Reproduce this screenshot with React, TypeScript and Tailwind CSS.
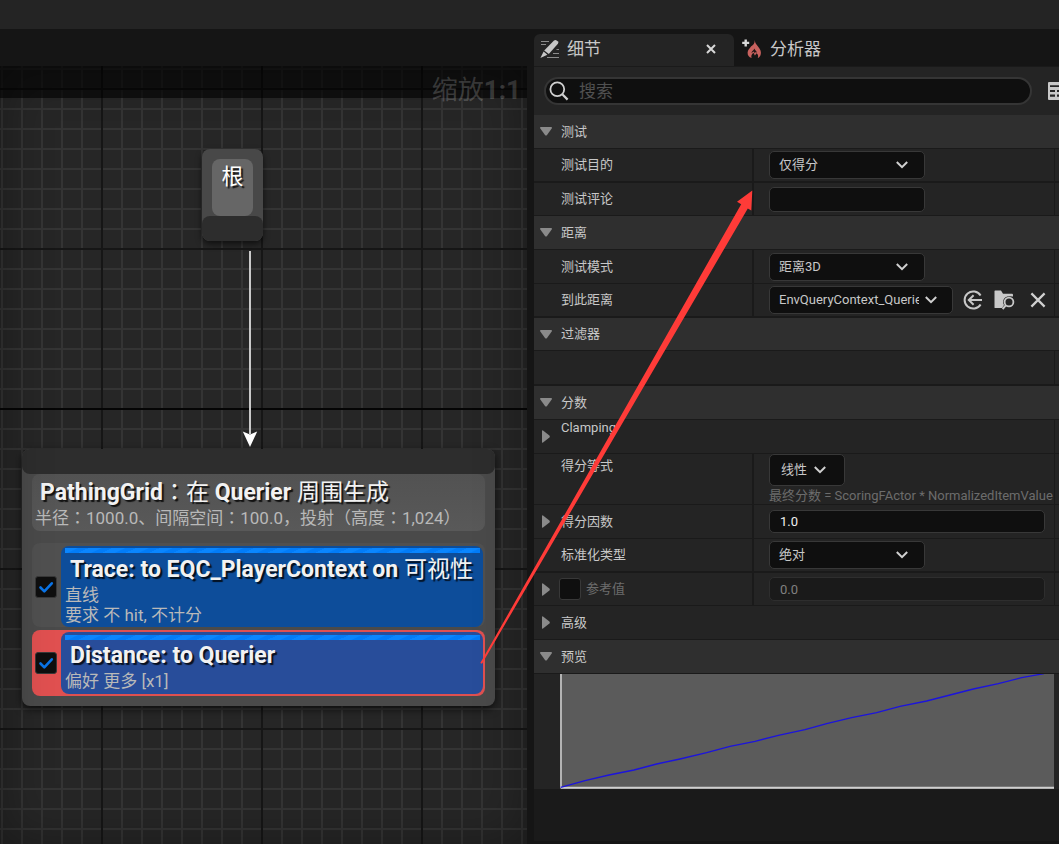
import type { ReactNode } from 'react';

const SANS = "font-['Roboto','Noto_Sans_CJK_SC',sans-serif]";

/* Full-width punctuation with centred glyphs */
function Mark({ children }: { children: ReactNode }) {
  return <span className="font-['Noto_Sans_CJK_JP',sans-serif] font-normal">{children}</span>;
}

function Cjk({ children }: { children: ReactNode }) {
  return <span className="font-normal">{children}</span>;
}

function Chevron({ className = '' }: { className?: string }) {
  return (
    <svg viewBox="0 0 12 8" className={`h-2 w-3 ${className}`} fill="none" stroke="#d0d0d0" strokeWidth="2" aria-hidden="true">
      <path d="M0.8 1 L6 6.2 L11.2 1" />
    </svg>
  );
}

function Triangle({ open }: { open: boolean }) {
  return open ? (
    <svg viewBox="0 0 12 9" className="h-[9px] w-3" fill="#8a8a8a" aria-hidden="true">
      <path d="M0.8 0 H11.2 Q12.4 0.4 11.7 1.4 L7 8 Q6 9 5 8 L0.3 1.4 Q-0.4 0.4 0.8 0Z" />
    </svg>
  ) : (
    <svg viewBox="0 0 8 13" className="ml-0.5 h-[13px] w-2" fill="#8a8a8a" aria-hidden="true">
      <path d="M0 0.8 Q0.2 0 1 0.4 L7.4 5.6 Q8.2 6.5 7.4 7.4 L1 12.6 Q0.2 13 0 12.2Z" />
    </svg>
  );
}

function Expander({ open, name }: { open: boolean; name: string }) {
  return (
    <button type="button" aria-expanded={open} aria-label={name} className="flex w-[21px] shrink-0 items-center">
      <Triangle open={open} />
    </button>
  );
}

function Section({ title, open = true, tall = 'h-[34px]' }: { title: string; open?: boolean; tall?: string }) {
  return (
    <h2 className={`border-b border-[#1a1a1a] text-[13px] leading-5 ${tall} ${open ? 'bg-[#2f2f2f]' : 'bg-[#242424]'}`}>
      <button type="button" aria-expanded={open} className="flex h-full w-full items-center pl-1.5 text-left">
        <span className="flex w-[21px]">
          <Triangle open={open} />
        </span>
        {title}
      </button>
    </h2>
  );
}

type RowProps = {
  label: ReactNode;
  size?: string;
  line?: string;
  expander?: string;
  top?: boolean;
  children?: ReactNode;
};

function Row({ label, size = 'h-[34px]', line = 'border-b', expander, top, children }: RowProps) {
  return (
    <div className={`flex border-[#1a1a1a] bg-[#242424] text-[13px] leading-5 ${size} ${line}`}>
      <div className={`flex w-[218px] shrink-0 pl-1.5 ${top ? 'items-start pt-0.5' : 'items-center'}`}>
        {expander ? <Expander open={false} name={expander} /> : <span className="w-[21px] shrink-0" />}
        {label}
      </div>
      <div className="min-w-0 flex-1 border-l-2 border-[#1a1a1a]">
        <div className="flex h-full items-center pl-[15px]">{children}</div>
      </div>
      <div className="w-[5px] shrink-0 border-l border-[#1a1a1a]" />
    </div>
  );
}

function Select({ id, value, width, height = 'h-7', pad = 'pl-[9px] pr-[33px]', chevron = 'right-[17px]' }: { id: string; value: string; width: string; height?: string; pad?: string; chevron?: string }) {
  return (
    <div className={`relative flex shrink-0 items-center ${width}`}>
      <select id={id} defaultValue={value} className={`w-full appearance-none rounded-[5px] border border-[#383838] bg-[#0f0f0f] text-[13px] text-[#c8c8c8] ${height} ${pad}`}>
        <option>{value}</option>
      </select>
      <Chevron className={`pointer-events-none absolute ${chevron}`} />
    </div>
  );
}

function Tick({ name }: { name: string }) {
  return (
    <span className="relative mr-1 ml-[3px] flex h-[22px] w-[22px] shrink-0">
      <input type="checkbox" defaultChecked aria-label={name} className="h-full w-full appearance-none rounded-[3px] border border-[#383838] bg-[#0f0f0f]" />
      <svg viewBox="0 0 22 22" className="pointer-events-none absolute inset-0" fill="none" stroke="#0a74e8" strokeWidth="2.6" strokeLinecap="round" strokeLinejoin="round" aria-hidden="true">
        <path d="M5.5 11.5 L9.3 15.3 L16.8 7.3" />
      </svg>
    </span>
  );
}

function Stripe() {
  return <div className="mr-[3px] ml-1 h-[5px] bg-[repeating-linear-gradient(155deg,#0a86ff_0px,#0a86ff_5px,#027cf8_6px,#027cf8_10px)]" />;
}

const TITLE = 'text-[23px] font-bold whitespace-nowrap text-[#f2f2f2] [text-shadow:2px_2px_1px_#000000cc]';
const SUB = 'text-[17px] leading-5 whitespace-nowrap text-[#b9b9b9]';

function Graph() {
  return (
    <section aria-label="环境查询图" className="flex min-w-0 flex-col">
      <div className="h-[37px] bg-[#151515]" />
      <div className="relative flex-1 overflow-hidden bg-[#262626]">
        <div className="absolute inset-0 bg-[linear-gradient(to_right,#343434_2px,transparent_2px),linear-gradient(to_bottom,#343434_2px,transparent_2px)] bg-[size:20px_20px] bg-[position:1px_2px]" />
        <div className="absolute inset-0 bg-[linear-gradient(to_right,#161616_2px,transparent_2px),linear-gradient(to_bottom,#161616_2px,transparent_2px)] bg-[size:160px_160px] bg-[position:101px_22px]" />
        <div className="absolute inset-x-0 top-[342px] h-0.5 bg-[#050505]" />
        <div className="absolute inset-x-0 top-0 h-8 bg-black/60" />
        <p className="absolute top-1.5 right-1.5 text-[26px] leading-9 font-bold text-white/20">
          <Cjk>缩放</Cjk>1:1
        </p>

        <div className="absolute top-[83px] left-[202px] flex h-[92px] w-[61px] flex-col rounded-lg bg-[#484848] shadow-[0_3px_6px_#00000099]">
          <div className="mx-2.5 mt-2.5 h-[57px] rounded-lg bg-[#666666] pt-1 text-center text-[22px] leading-7 text-white [text-shadow:2px_2px_1px_#000000cc]">根</div>
          <div className="flex-1 rounded-lg bg-[#2d2d2d]" />
        </div>

        <svg viewBox="0 0 16 198" className="absolute top-[184px] left-[242px] h-[198px] w-4" aria-hidden="true">
          <path d="M8 1 V184" stroke="#c9c9c9" strokeWidth="2" />
          <path d="M0.8 181.5 L8 184.5 L15.2 181.5 L8 197Z" fill="#ffffff" />
        </svg>

        <div className="absolute top-[383px] left-[22px] w-[473px] rounded-lg bg-[#4a4a4a] pb-2.5 shadow-[0_3px_8px_#000000aa]">
          <div className="h-[25px] rounded-lg bg-[#2d2d2d]" />
          <div className="mx-2.5 h-[57px] rounded-lg bg-linear-to-b from-[#525252] to-[#595959] px-[3px] pt-0.5">
            <p className={`pl-[5px] leading-7 ${TITLE}`}>
              PathingGrid<Mark>：</Mark><Cjk>在</Cjk> Querier <Cjk>周围生成</Cjk>
            </p>
            <p className={SUB}>
              半径<Mark>：</Mark>1000.0、间隔空间<Mark>：</Mark>100.0，投射（高度<Mark>：</Mark>1,024）
            </p>
          </div>

          <div className="mx-2.5 mt-3 flex items-center rounded-lg bg-[#505050] pt-[3px] pr-0.5">
            <Tick name="启用 Trace" />
            <div className="h-[81px] min-w-0 flex-1 rounded-lg bg-[#0d4d9a] pt-0.5">
              <Stripe />
              <p className={`pt-0.5 pl-[9px] leading-[30px] ${TITLE}`}>
                Trace: to EQC_PlayerContext on <Cjk>可视性</Cjk>
              </p>
              <p className={`pl-1 ${SUB}`}>直线</p>
              <p className={`pl-1 ${SUB}`}>要求 不 hit, 不计分</p>
            </div>
          </div>

          <div className="mx-2.5 mt-[3px] flex items-center rounded-lg bg-[#e05050] py-0.5 pr-0.5">
            <Tick name="启用 Distance" />
            <div className="h-[62px] min-w-0 flex-1 rounded-lg bg-[#284d9a] pt-[3px]">
              <Stripe />
              <p className={`pt-px pl-[9px] leading-[30px] ${TITLE}`}>Distance: to Querier</p>
              <p className={`pl-1 ${SUB}`}>偏好 更多 [x1]</p>
            </div>
          </div>
        </div>

        <div className="pointer-events-none absolute inset-0 shadow-[inset_0_0_50px_#00000059]" />
      </div>
    </section>
  );
}

function PencilIcon() {
  return (
    <svg viewBox="0 0 20 20" className="h-5 w-5" aria-hidden="true">
      <path d="M1 2.5h8M1 5.5h5M16.5 10.5H19M13 14.5h6M7 18.5h12" stroke="#8c8c8c" strokeWidth="1" />
      <path d="M14 1.6 Q15.4 0.4 16.6 1.4 L18 2.6 Q18.9 3.6 17.9 4.8 L8.8 15 L4.2 11.4Z" fill="#c8c8c8" />
      <path d="M3.6 12.6 L7.4 15.8 L0.4 18.9Z" fill="#c8c8c8" />
    </svg>
  );
}

function FlameIcon() {
  return (
    <svg viewBox="0 0 20 20" className="h-5 w-5" aria-hidden="true">
      <path d="M12.8 1 C13 4 14 5 16 7.4 C18.2 10 19.4 12.4 18.8 15 C18.4 17 17.4 18.4 15.8 19 C16.6 16.6 16 15.4 14.6 14.2 L12.9 16.6 L11.4 13.8 C9.4 15.4 9 17 9.6 19 C7 18.4 5.4 16.4 5.6 13.6 C5.8 10.6 7.6 9.6 9 7.4 C11.4 6 12.8 4.4 12.8 1Z" fill="#c9625f" />
      <path d="M12.4 9.6 C12.6 11 14.6 12 15 13.8 L13.6 13 L12.8 14.6 L11.8 12.4 L9.4 14 C9.6 12 11.8 11.6 12.4 9.6Z" fill="#231616" />
      <path d="M3.7 0.4 V7.4 M0.2 3.9 H7.2" stroke="#d8d8d8" strokeWidth="2.4" />
    </svg>
  );
}

function Details() {
  return (
    <section aria-label="细节" className="flex min-w-0 flex-col bg-[#151515]">
      <div role="tablist" className="flex h-[37px] items-stretch pt-[5px] text-[17px] leading-6">
        <div className="flex w-[200px] items-center rounded-t-md bg-[#242424] pr-[18px] pb-0.5 pl-1.5">
          <button type="button" role="tab" aria-selected="true" className="flex flex-1 items-center gap-[7px]">
            <PencilIcon />
            细节
          </button>
          <button type="button" aria-label="关闭">
            <svg viewBox="0 0 10 10" className="h-2.5 w-2.5" stroke="#d8d8d8" strokeWidth="2" aria-hidden="true">
              <path d="M1 1 L9 9 M9 1 L1 9" />
            </svg>
          </button>
        </div>
        <button type="button" role="tab" aria-selected="false" className="flex items-center gap-2 pb-0.5 pl-2">
          <FlameIcon />
          分析器
        </button>
      </div>

      <div className="flex h-[49px] items-center overflow-hidden border-t border-[#1a1a1a] bg-[#242424] pb-px pl-2.5">
        <label className="mr-4 flex h-7 min-w-0 flex-1 items-center rounded-full border-2 border-[#353535] bg-[#0f0f0f] pl-[3px]">
          <svg viewBox="0 0 20 20" className="mr-2.5 h-5 w-5 shrink-0" fill="none" stroke="#d0d0d0" strokeWidth="1.8" aria-hidden="true">
            <circle cx="8.3" cy="8.3" r="6.9" />
            <path d="M13.3 13.3 L18.6 18.6" strokeWidth="2.2" />
          </svg>
          <input type="search" aria-label="搜索" placeholder="搜索" className="min-w-0 flex-1 bg-transparent text-[17px] leading-6 outline-none placeholder:text-[#505050]" />
        </label>
        <button type="button" aria-label="表格视图" className="-mr-2 shrink-0">
          <svg viewBox="0 0 19 18" className="h-[18px] w-[19px]" aria-hidden="true">
            <rect width="19" height="18" rx="1" fill="#c8c8c8" />
            <path d="M2 3.2h15v1.8H2zM2 8h5v2H2zM2 12.5h5v2.2H2zM9 8h8v2H9zM9 12.5h8v2.2H9z" fill="#242424" />
          </svg>
        </button>
      </div>

      <Section title="测试" />
      <Row label={<label htmlFor="purpose">测试目的</label>} line="border-b-2">
        <Select id="purpose" value="仅得分" width="w-[156px]" />
      </Row>
      <Row label={<label htmlFor="comment">测试评论</label>} size="h-[33px]">
        <input id="comment" type="text" className="h-[25px] w-[156px] rounded-[5px] border border-[#383838] bg-[#0f0f0f] px-2.5" />
      </Row>

      <Section title="距离" />
      <Row label={<label htmlFor="mode">测试模式</label>}>
        <Select id="mode" value="距离3D" width="w-[156px]" />
      </Row>
      <Row label={<label htmlFor="target">到此距离</label>} line="border-b-2">
        <Select id="target" value="EnvQueryContext_Querier" width="w-[184px]" chevron="right-4" />
        <button type="button" aria-label="使用所选" className="ml-2.5 shrink-0">
          <svg viewBox="0 0 20 20" className="h-5 w-5" fill="none" stroke="#c8c8c8" strokeWidth="2" aria-hidden="true">
            <path d="M17.6 5.6 A8.6 8.6 0 1 0 17.6 14.4" />
            <path d="M19 10 H6 M10.6 5.2 L5.8 10 L10.6 14.8" />
          </svg>
        </button>
        <button type="button" aria-label="浏览" className="ml-[11px] shrink-0">
          <svg viewBox="0 0 21 20" className="h-5 w-[21px]" aria-hidden="true">
            <path d="M0.5 1 Q0.5 0.4 1.2 0.4 H7 L9 3.8 H18 Q19 3.8 19 5 V6.6 Q11 5 9.4 10 Q8.6 13 10 15 L8 18 H1.2 Q0.5 18 0.5 17.4Z" fill="#c8c8c8" />
            <circle cx="15" cy="12" r="4.4" fill="none" stroke="#c8c8c8" strokeWidth="1.8" />
            <path d="M12 15.2 L8.6 19" stroke="#c8c8c8" strokeWidth="2" />
          </svg>
        </button>
        <button type="button" aria-label="清除" className="ml-[15px] shrink-0">
          <svg viewBox="0 0 16 16" className="h-4 w-4" stroke="#d0d0d0" strokeWidth="2.2" aria-hidden="true">
            <path d="M1.4 1.4 L14.6 14.6 M14.6 1.4 L1.4 14.6" />
          </svg>
        </button>
      </Row>

      <Section title="过滤器" tall="h-[33px]" />
      <div className="flex h-[35px] border-b-2 border-[#1a1a1a] bg-[#242424]">
        <div className="flex-1" />
        <div className="w-[5px] border-l border-[#1a1a1a]" />
      </div>

      <Section title="分数" />
      <div className="flex h-[34px] border-b border-[#1a1a1a] bg-[#242424] text-[13px] leading-4">
        <div className="flex flex-1 items-start pl-1.5">
          <span className="flex pt-2.5">
            <Expander open={false} name="Clamping" />
          </span>
          Clamping
        </div>
        <div className="w-[5px] border-l border-[#1a1a1a]" />
      </div>
      <Row label={<label htmlFor="equation">得分等式</label>} size="h-[51px]" top>
        <div className="flex min-w-0 flex-col self-start">
          <Select id="equation" value="线性" width="w-[76px]" height="h-8" pad="pl-[11px] pr-7" chevron="right-[19px]" />
          <p className="leading-5 whitespace-nowrap text-[#6c6c6c]">最终分数 = ScoringFActor * NormalizedItemValue</p>
        </div>
      </Row>
      <Row label={<label htmlFor="factor">得分因数</label>} expander="得分因数">
        <input id="factor" type="text" defaultValue="1.0" className="mr-[9px] h-[23px] min-w-0 flex-1 rounded-[5px] border border-[#383838] bg-[#0f0f0f] px-2.5 text-[#f0f0f0]" />
      </Row>
      <Row label={<label htmlFor="normalize">标准化类型</label>} line="border-b-2">
        <Select id="normalize" value="绝对" width="w-[156px]" />
      </Row>
      <Row
        size="h-[33px]"
        expander="参考值"
        label={
          <label className="-ml-0.5 flex items-center gap-[5px] text-[#6c6c6c]">
            <input type="checkbox" className="h-[22px] w-[22px] appearance-none rounded-[3px] border border-[#383838] bg-[#0f0f0f]" />
            参考值
          </label>
        }
      >
        <input type="text" aria-label="参考值数值" defaultValue="0.0" disabled className="mr-[9px] h-6 min-w-0 flex-1 rounded-[5px] border border-[#2e2e2e] bg-[#1a1a1a] px-2.5 text-[#808080]" />
      </Row>
      <Section title="高级" open={false} />
      <Section title="预览" />

      <div className="flex h-[115px] bg-[#242424] pr-[5px] pl-[26px]">
        <svg viewBox="0 0 1482 345" preserveAspectRatio="none" className="h-full w-full bg-[#5b5b5b]" fill="none" role="img" aria-label="得分曲线">
          <path d="M3 0 V342" stroke="#b4b4b4" strokeWidth="6" />
          <path d="M3 341 H1482" stroke="#cfcfcf" strokeWidth="6" />
          <path
            d="M2 340 L75 320 L147 303 L222 288 L290 270 L360 255 L440 236 L510 217 L585 202 L655 184 L735 167 L800 149 L875 131 L950 116 L1020 97 L1100 81 L1170 63 L1240 45 L1315 29 L1385 11 L1452 -1"
            stroke="#1c14dc"
            strokeWidth="4"
          />
        </svg>
      </div>
      <div className="mb-[3px] flex-1 bg-[#1a1a1a]" />
    </section>
  );
}

export default function App() {
  return (
    <div className={`relative flex min-h-screen flex-col overflow-hidden bg-[#151515] text-[#c8c8c8] ${SANS}`}>
      <header className="h-[29px] bg-[#242424]" />
      <main className="grid flex-1 grid-cols-[527fr_525fr] gap-[7px]">
        <Graph />
        <Details />
      </main>
      <svg viewBox="480 189 274 476" className="pointer-events-none absolute top-[189px] left-[480px] h-[476px] w-[274px]" aria-hidden="true">
        <path d="M480.3 663 L741.2 204.2 L737 201.8 L752.3 190.5 L751.3 210.6 L747.8 208.4 L482 663.8Z" fill="#ff3b38" />
      </svg>
    </div>
  );
}
